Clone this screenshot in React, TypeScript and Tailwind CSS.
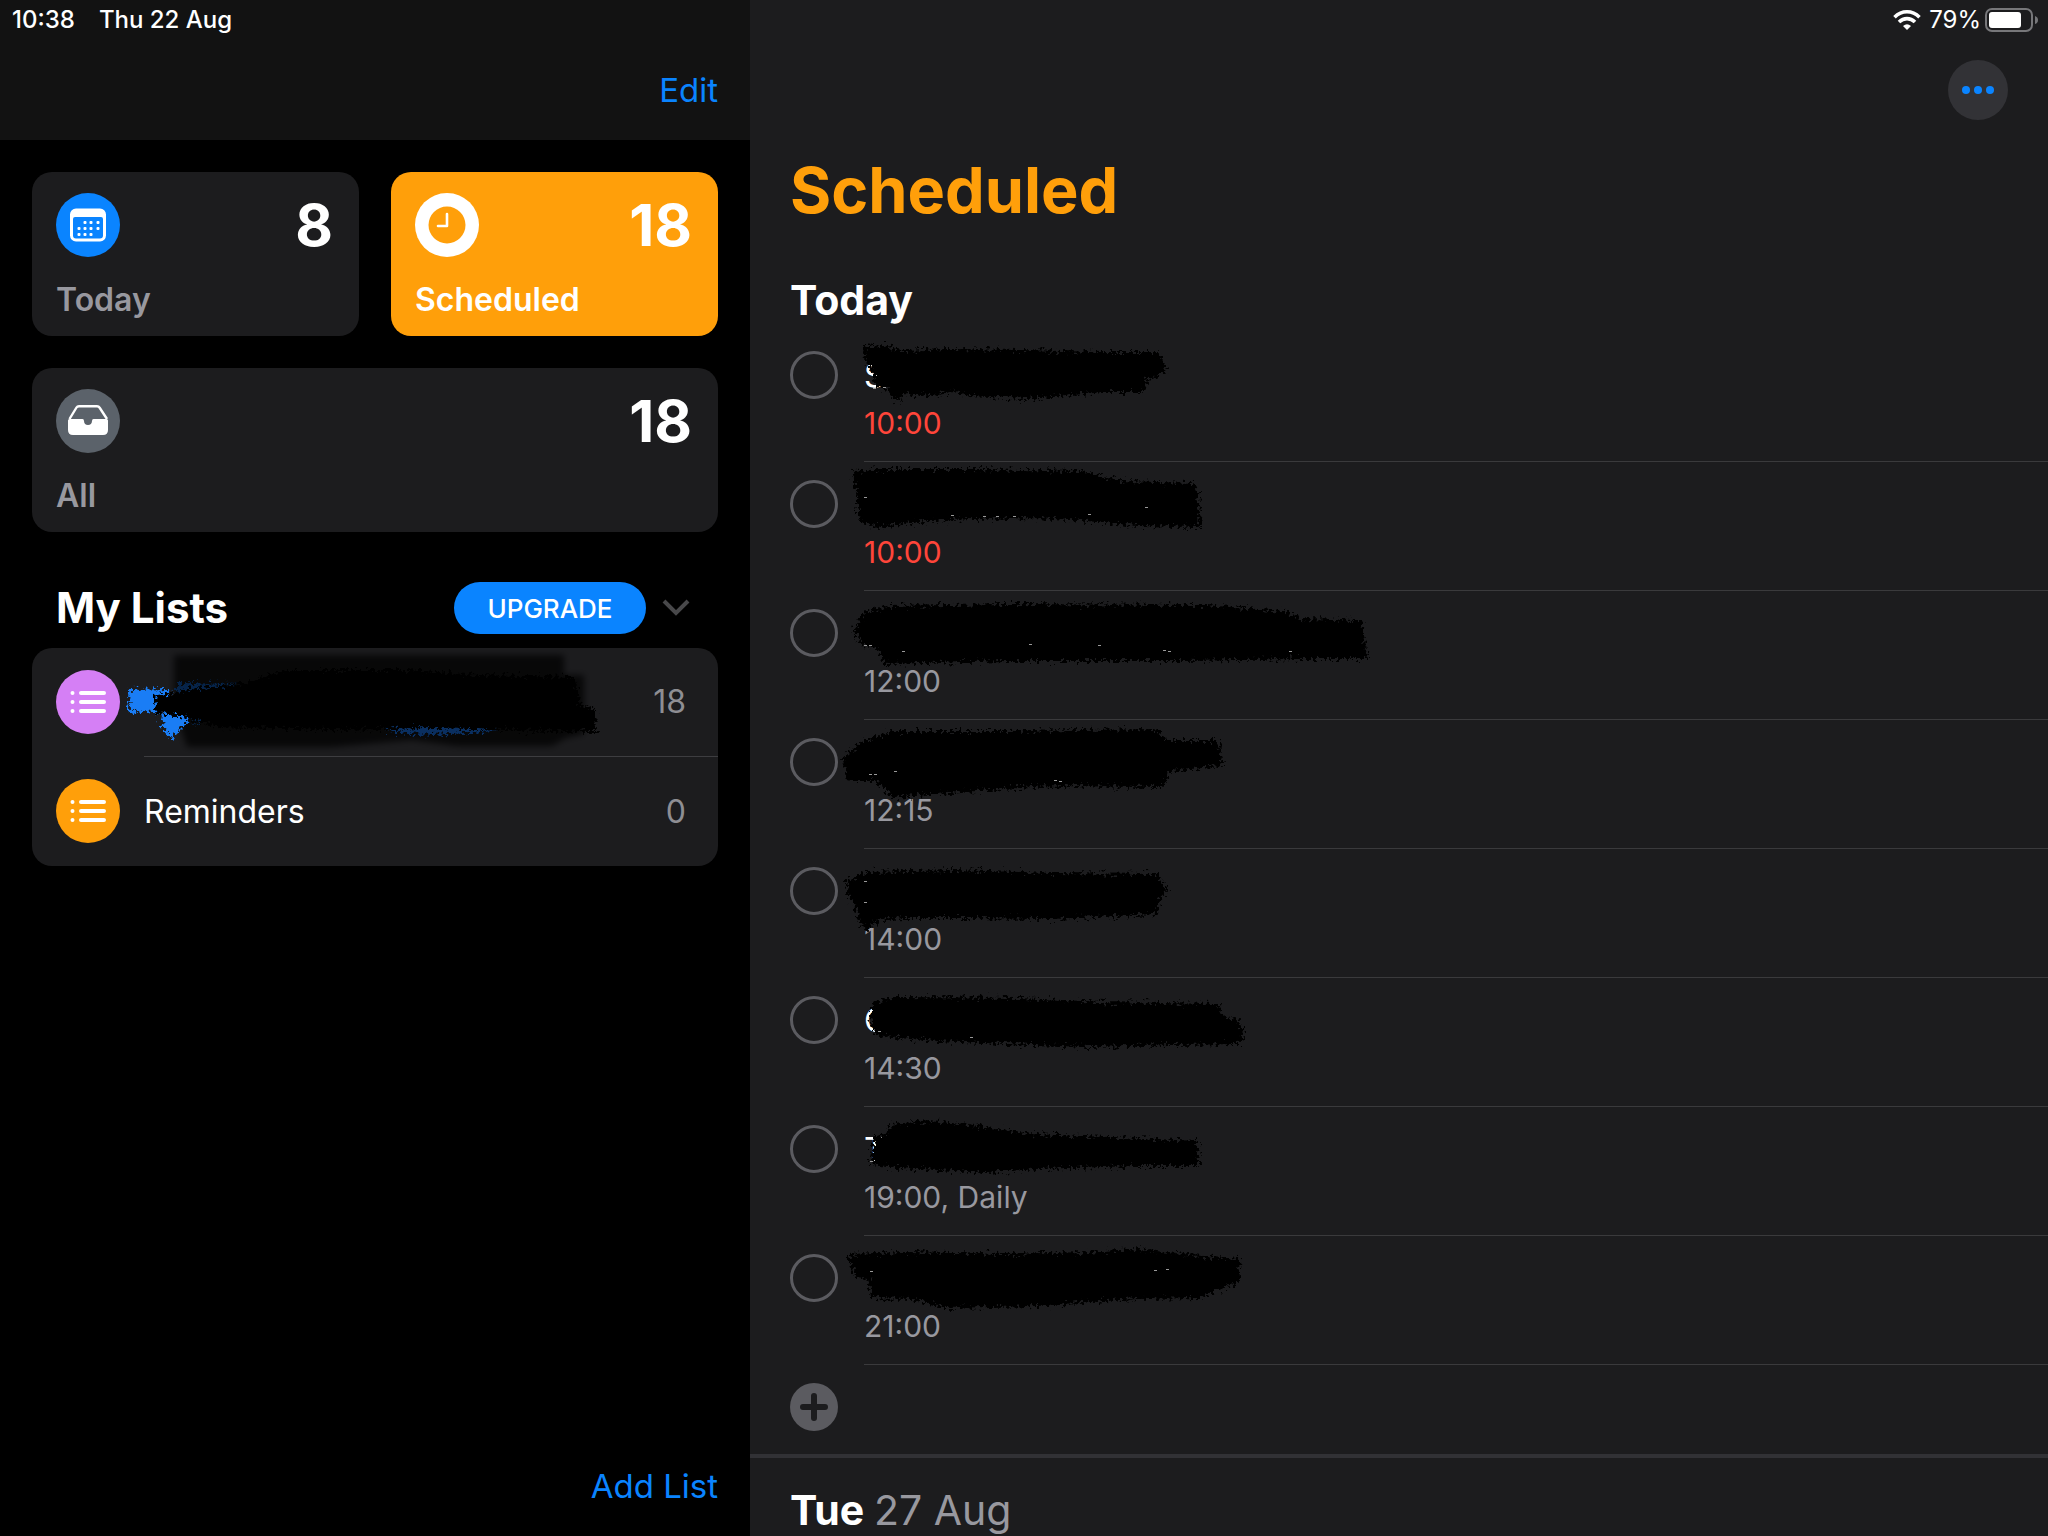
import React from "react";

type Point = [number, number];

type Reminder = {
  id: string;
  initial: string;
  time: string;
  overdue?: boolean;
  outline: Point[];
  specks: Point[];
};

const reminders: Reminder[] = [
  {
    id: "r1",
    initial: "S",
    time: "10:00",
    overdue: true,
    outline: [[74, 15], [93, 13], [113, 19], [157, 17], [230, 18], [313, 20], [368, 20], [376, 37], [368, 43], [357, 45], [352, 58], [313, 58], [263, 63], [237, 65], [180, 62], [163, 57], [140, 62], [113, 60], [108, 68], [97, 55], [86, 51], [84, 40], [78, 30]],
    specks: [[95, 54], [85, 55]],
  },
  {
    id: "r2",
    initial: "",
    time: "10:00",
    overdue: true,
    outline: [[64, 10], [93, 8], [180, 8], [290, 10], [333, 20], [403, 22], [407, 31], [410, 64], [347, 63], [297, 58], [247, 55], [180, 56], [140, 58], [87, 64], [70, 58], [67, 31]],
    specks: [[76, 35], [163, 53], [195, 54], [208, 54], [225, 54], [300, 52], [357, 45]],
  },
  {
    id: "r3",
    initial: "",
    time: "12:00",
    outline: [[65, 39], [75, 22], [99, 16], [217, 14], [415, 15], [494, 21], [510, 29], [571, 30], [577, 67], [514, 67], [395, 69], [217, 69], [95, 72], [87, 56], [73, 54]],
    specks: [[76, 54], [81, 54], [114, 60], [241, 53], [310, 54], [375, 59], [380, 60], [501, 60]],
  },
  {
    id: "r4",
    initial: "",
    time: "12:15",
    outline: [[53, 40], [71, 23], [103, 12], [217, 12], [367, 10], [375, 21], [427, 21], [432, 45], [379, 50], [373, 66], [257, 65], [158, 72], [103, 77], [95, 67], [83, 60], [59, 60]],
    specks: [[81, 54], [86, 54], [106, 51], [266, 60], [271, 61]],
  },
  {
    id: "r5",
    initial: "",
    time: "14:00",
    outline: [[57, 34], [77, 24], [163, 22], [263, 25], [367, 26], [376, 41], [368, 49], [367, 64], [263, 69], [180, 68], [113, 68], [87, 71], [77, 80], [70, 74], [67, 58], [60, 48]],
    specks: [[76, 32], [76, 53]],
  },
  {
    id: "r6",
    initial: "C",
    time: "14:30",
    outline: [[83, 25], [107, 20], [230, 21], [313, 25], [427, 27], [433, 39], [447, 42], [453, 55], [448, 65], [380, 66], [300, 68], [213, 65], [147, 62], [97, 58], [84, 56], [81, 39]],
    specks: [[90, 53], [182, 59]],
  },
  {
    id: "r7",
    initial: "T",
    time: "19:00, Daily",
    outline: [[85, 30], [97, 29], [100, 18], [140, 15], [180, 19], [240, 28], [347, 32], [407, 35], [408, 58], [347, 58], [247, 61], [197, 65], [147, 62], [107, 60], [81, 57]],
    specks: [[82, 54]],
  },
  {
    id: "r8",
    initial: "",
    time: "21:00",
    outline: [[58, 19], [113, 17], [213, 19], [297, 17], [347, 14], [413, 21], [448, 24], [449, 44], [430, 52], [410, 61], [347, 62], [247, 69], [153, 71], [123, 62], [82, 61], [79, 42], [67, 41]],
    specks: [[82, 35], [366, 34], [378, 33]],
  },
];

const toPoints = (pts: Point[]) => pts.map((p) => p.join(",")).join(" ");

function BrushFilters() {
  return (
    <svg className="absolute h-0 w-0" aria-hidden="true">
      <filter id="rough" x="-10%" y="-30%" width="120%" height="160%" colorInterpolationFilters="sRGB">
        <feTurbulence type="fractalNoise" baseFrequency="0.3" numOctaves="3" seed="4" result="n" />
        <feDisplacementMap in="SourceGraphic" in2="n" scale="14" xChannelSelector="R" yChannelSelector="G" />
        <feGaussianBlur stdDeviation="0.7" />
      </filter>
      <filter id="soft" x="-10%" y="-20%" width="120%" height="140%">
        <feGaussianBlur stdDeviation="3" />
      </filter>
    </svg>
  );
}

function Scribble({ outline, specks }: { outline: Point[]; specks: Point[] }) {
  return (
    <svg className="pointer-events-none absolute top-0 left-0 h-full w-[640px] overflow-visible" aria-hidden="true">
      <polygon points={toPoints(outline)} fill="#000" stroke="#000" strokeWidth="2" strokeLinejoin="round" filter="url(#rough)" />
      {specks.map(([x, y]) => (
        <path key={`${x}-${y}`} d={`M${x - 2} ${y + 1}l1-1 1 1 1-1`} stroke="#999" strokeWidth="1" fill="none" />
      ))}
    </svg>
  );
}

function ListScribble() {
  return (
    <svg className="pointer-events-none absolute top-0 left-0 h-full w-full overflow-visible" aria-hidden="true">
      <g filter="url(#soft)" fill="#000">
        <path d="M142 7H532V27H552V86L534 90 520 98H425L380 92 300 99H155L142 60Z" opacity="0.72" />
      </g>
      <g filter="url(#rough)">
        <path d="M96 42 137 41 138 54 128 66 114 63 97 65Z" fill="#1a7df5" />
        <path d="M129 65 160 68 150 79 139 90 131 80Z" fill="#1a7df5" />
        <path d="M145 35 207 36 180 44 145 45Z" fill="#06244a" />
        <path d="M165 66 178 74 160 76Z" fill="#06244a" />
        <path d="M345 79 475 79 455 84 400 87 365 84Z" fill="#0a2f60" />
        <path d="M528 48 545 50 547 57Z" fill="#06244a" />
      </g>
      <polygon
        points="121,49 159,41 207,36 255,22 375,22 446,27 542,29 549,58 563,61 564,84 518,83 398,80 303,82 183,79 159,71 125,65"
        fill="#000"
        filter="url(#rough)"
      />
    </svg>
  );
}

function CalendarIcon() {
  return (
    <svg viewBox="0 0 64 64" className="h-16 w-16" aria-hidden="true">
      <circle cx="32" cy="32" r="32" fill="#0a84ff" />
      <path
        fillRule="evenodd"
        fill="#fff"
        d="M20 15.500h24a6 6 0 0 1 6 6v21a6 6 0 0 1-6 6H20a6 6 0 0 1-6-6v-21a6 6 0 0 1 6-6ZM17 26v16.500a3 3 0 0 0 3 3h24a3 3 0 0 0 3-3V26a2 2 0 0 0-2-2H19a2 2 0 0 0-2 2Z"
      />
      <g fill="#fff">
        {[[28, 29], [34, 29], [41, 29], [22, 35], [28, 35], [34, 35], [41, 35], [22, 41], [28, 41], [34, 41]].map(([x, y]) => (
          <rect key={`${x}-${y}`} x={x - 0.5} y={y - 1} width="3" height="3" rx="1" />
        ))}
      </g>
    </svg>
  );
}

function ClockIcon() {
  return (
    <svg viewBox="0 0 64 64" className="h-16 w-16" aria-hidden="true">
      <circle cx="32" cy="32" r="32" fill="#fff" />
      <circle cx="32" cy="32" r="18.500" fill="#ff9f0a" />
      <path d="M32 21v12h-9" fill="none" stroke="#fff" strokeWidth="2.600" strokeLinecap="round" strokeLinejoin="round" />
    </svg>
  );
}

function TrayIcon() {
  return (
    <svg viewBox="0 0 64 64" className="h-16 w-16" aria-hidden="true">
      <circle cx="32" cy="32" r="32" fill="#5b626a" />
      <path d="M13.500 30 20.500 18.500Q21.300 17.200 23 17.200H41Q42.700 17.200 43.500 18.500L51 30" fill="none" stroke="#fff" strokeWidth="2.400" strokeLinejoin="round" />
      <path d="M12 31.500Q12 30 13.500 30H26.500Q28 30 28 32 28.200 36 32 36T36 32Q36 30 37.500 30H50.500Q52 30 52 31.500V41Q52 46 47 46H17Q12 46 12 41Z" fill="#fff" />
    </svg>
  );
}

function BulletIcon({ color }: { color: string }) {
  return (
    <svg viewBox="0 0 64 64" className="h-16 w-16 shrink-0" aria-hidden="true">
      <circle cx="32" cy="32" r="32" fill={color} />
      <g stroke="#fff" strokeWidth="4" strokeLinecap="round">
        <path d="M25 23H48M25 32H48M25 41H48M16.500 23h.01M16.500 32h.01M16.500 41h.01" />
      </g>
    </svg>
  );
}

function WifiIcon() {
  return (
    <svg viewBox="0 0 28 20" className="h-5 w-7" fill="none" stroke="#fff" aria-hidden="true">
      <path d="M1.500 7.200Q7 1.800 14 1.800T26.500 7.200" strokeWidth="3.600" />
      <path d="M6 12Q9.500 8.600 14 8.600T22 12" strokeWidth="3.600" />
      <path d="M14 20 10 16Q14 12.600 18 16Z" fill="#fff" stroke="none" />
    </svg>
  );
}

function BatteryIcon() {
  return (
    <svg viewBox="0 0 54 24" className="h-6 w-[54px]" aria-hidden="true">
      <rect x="1" y="1" width="46" height="22" rx="6" fill="none" stroke="#77777a" strokeWidth="2" />
      <rect x="4" y="4" width="32" height="16" rx="3" fill="#fff" />
      <path d="M50 8Q53 9 53 12T50 16Z" fill="#77777a" />
    </svg>
  );
}

type TileProps = { icon: React.ReactNode; count: number; label: string; active?: boolean; wide?: boolean };

function Tile({ icon, count, label, active, wide }: TileProps) {
  return (
    <button
      className={`flex h-41 flex-col justify-between rounded-[20px] pt-[21px] pr-[26px] pb-3 pl-6 text-left ${active ? "bg-[#ff9f0a] text-white" : "bg-[#1c1c1e] text-[#98989f]"} ${wide ? "col-span-2" : ""}`}
    >
      <span className="flex w-full items-center justify-between">
        {icon}
        <span className="text-[58px] leading-16 font-bold text-white">{count}</span>
      </span>
      <span className="text-[32px] leading-12 font-semibold">{label}</span>
    </button>
  );
}

function Sidebar() {
  return (
    <aside className="flex w-[750px] shrink-0 flex-col bg-black">
      <header className="flex h-35 flex-col bg-[#121212]">
        <div className="flex h-10 items-center gap-6 pl-3 text-2xl font-medium">
          <span>10:38</span>
          <span>Thu 22 Aug</span>
        </div>
        <div className="flex h-25 items-center justify-end pr-8">
          <button className="text-[33px] leading-11 text-[#0a84ff]">Edit</button>
        </div>
      </header>
      <nav className="grid grid-cols-2 gap-8 px-8 pt-8">
        <Tile icon={<CalendarIcon />} count={8} label="Today" />
        <Tile icon={<ClockIcon />} count={18} label="Scheduled" active />
        <Tile icon={<TrayIcon />} count={18} label="All" wide />
      </nav>
      <section className="px-8 pt-12">
        <div className="mb-3 flex h-14 items-center pr-7 pl-6">
          <h2 className="text-[42px] leading-14 font-bold">My Lists</h2>
          <button className="ml-auto h-13 w-48 rounded-full bg-[#0a84ff] text-[26px] font-medium">UPGRADE</button>
          <button className="ml-4" aria-label="Collapse lists">
            <svg viewBox="0 0 28 20" className="h-5 w-7" fill="none" stroke="#48484a" strokeWidth="4" aria-hidden="true">
              <path d="M2 3 14 15 26 3" />
            </svg>
          </button>
        </div>
        <ul className="rounded-[20px] bg-[#1c1c1e] text-[32px]">
          <li className="relative flex h-[109px] pl-6">
            <span className="pt-[22px]">
              <BulletIcon color="#d57ff5" />
            </span>
            <div className="ml-6 flex h-full flex-1 items-center justify-end border-b border-[#3d3d40] pr-8">
              <span className="text-[#8e8e93]">18</span>
            </div>
            <ListScribble />
          </li>
          <li className="flex h-[109px] pl-6">
            <span className="pt-[22px]">
              <BulletIcon color="#ff9f0a" />
            </span>
            <div className="ml-6 flex h-full flex-1 items-center justify-between pr-8">
              <span>Reminders</span>
              <span className="text-[#8e8e93]">0</span>
            </div>
          </li>
        </ul>
      </section>
      <footer className="mt-auto flex h-25 items-center justify-end pr-8">
        <button className="text-[33px] leading-11 text-[#0a84ff]">Add List</button>
      </footer>
    </aside>
  );
}

function ReminderRow({ item }: { item: Reminder }) {
  return (
    <li className="relative flex h-[129px]">
      <input
        id={item.id}
        type="checkbox"
        aria-label={`Reminder at ${item.time}`}
        className="mt-[18px] h-12 w-12 shrink-0 appearance-none rounded-full border-3 border-[#5b5b60]"
      />
      <div className="ml-[26px] flex-1 border-b border-[#3a3a3c] pt-5">
        <label htmlFor={item.id} className="block h-11 text-[33px] leading-11">
          {item.initial}
        </label>
        <p className={`mt-1 text-[30px] leading-11 ${item.overdue ? "text-[#ff453a]" : "text-[#98989f]"}`}>{item.time}</p>
      </div>
      <Scribble outline={item.outline} specks={item.specks} />
    </li>
  );
}

function Main() {
  return (
    <main className="flex min-w-0 flex-1 flex-col overflow-hidden bg-[#1c1c1e]">
      <div className="flex h-10 shrink-0 items-center justify-end pr-[9px] text-2xl">
        <WifiIcon />
        <span className="mr-1 ml-2">79%</span>
        <BatteryIcon />
      </div>
      <div className="flex h-25 shrink-0 items-center justify-end pr-10">
        <button className="flex h-15 w-15 items-center justify-center gap-1 rounded-full bg-[#323236]" aria-label="More options">
          <span className="h-2 w-2 rounded-full bg-[#0a84ff]" />
          <span className="h-2 w-2 rounded-full bg-[#0a84ff]" />
          <span className="h-2 w-2 rounded-full bg-[#0a84ff]" />
        </button>
      </div>
      <h1 className="pt-2 pl-10 text-[63px] leading-21 font-bold text-[#ff9f0a]">Scheduled</h1>
      <section className="pt-10 pl-10">
        <h2 className="text-[41px] leading-14 font-bold">Today</h2>
        <ul className="pt-[5px]">
          {reminders.map((item) => (
            <ReminderRow key={item.id} item={item} />
          ))}
        </ul>
        <div className="h-[89px] pt-[18px]">
          <button className="block" aria-label="Add reminder">
            <svg viewBox="0 0 48 48" className="h-12 w-12" aria-hidden="true">
              <circle cx="24" cy="24" r="24" fill="#5b5b60" />
              <path d="M24 13V35M13 24H35" stroke="#1c1c1e" strokeWidth="6" strokeLinecap="round" />
            </svg>
          </button>
        </div>
      </section>
      <section className="border-t-4 border-[#313135] pt-6 pl-10">
        <h2 className="text-[41px] leading-14 font-bold">
          Tue <span className="font-normal text-[#98989f]">27 Aug</span>
        </h2>
      </section>
    </main>
  );
}

export default function App() {
  return (
    <div className="relative flex h-screen w-full overflow-hidden bg-black font-['Inter','Liberation_Sans',sans-serif] text-white">
      <BrushFilters />
      <Sidebar />
      <Main />
    </div>
  );
}
